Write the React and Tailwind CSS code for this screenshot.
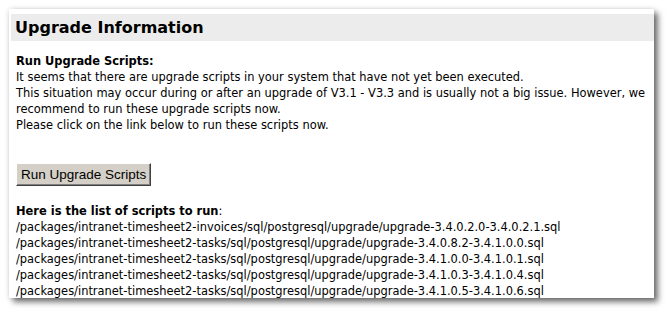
export default function App() {
  const scripts = [
    "/packages/intranet-timesheet2-invoices/sql/postgresql/upgrade/upgrade-3.4.0.2.0-3.4.0.2.1.sql",
    "/packages/intranet-timesheet2-tasks/sql/postgresql/upgrade/upgrade-3.4.0.8.2-3.4.1.0.0.sql",
    "/packages/intranet-timesheet2-tasks/sql/postgresql/upgrade/upgrade-3.4.1.0.0-3.4.1.0.1.sql",
    "/packages/intranet-timesheet2-tasks/sql/postgresql/upgrade/upgrade-3.4.1.0.3-3.4.1.0.4.sql",
    "/packages/intranet-timesheet2-tasks/sql/postgresql/upgrade/upgrade-3.4.1.0.5-3.4.1.0.6.sql",
  ];

  return (
    <div className="w-[668px] h-[313px] bg-white pt-[9px] pl-[9px] overflow-hidden">
      <div
        className="w-[645px] h-[289px] bg-white pt-[5px] pl-[2px] text-black"
        style={{
          boxShadow:
            "4px 4px 6px rgba(0,0,0,0.55), 0 0 5px rgba(0,0,0,0.15)",
          fontFamily: '"DejaVu Sans", Verdana, sans-serif',
        }}
      >
        <div className="bg-[#ececec] h-[27px] pl-[4px] flex items-center">
          <h1 className="text-[16px] font-bold leading-none">Upgrade Information</h1>
        </div>
        <div className="pl-[5px] pt-[12px] text-[11.45px] leading-[16px]">
          <div className="font-bold">Run Upgrade Scripts:</div>
          <div>It seems that there are upgrade scripts in your system that have not yet been executed.</div>
          <div>
            This situation may occur during or after an upgrade of V3.1 - V3.3 and is usually not a big issue. However, we
            recommend to run these upgrade scripts now.
          </div>
          <div>Please click on the link below to run these scripts now.</div>

          <button
            className="mt-[30px] h-[23px] px-[4px] bg-[#d4d0c8] text-[13.5px] leading-none border border-t-white border-l-white border-r-[#404040] border-b-[#404040]"
            style={{ fontFamily: '"Liberation Sans", Arial, sans-serif', boxShadow: "inset -1px -1px 0 #808080" }}
          >
            Run Upgrade Scripts
          </button>

          <div className="mt-[17px]">
            <span className="font-bold">Here is the list of scripts to run</span>:
          </div>
          {scripts.map((s, i) => (
            <div key={i}>{s}</div>
          ))}
        </div>
      </div>
    </div>
  );
}
